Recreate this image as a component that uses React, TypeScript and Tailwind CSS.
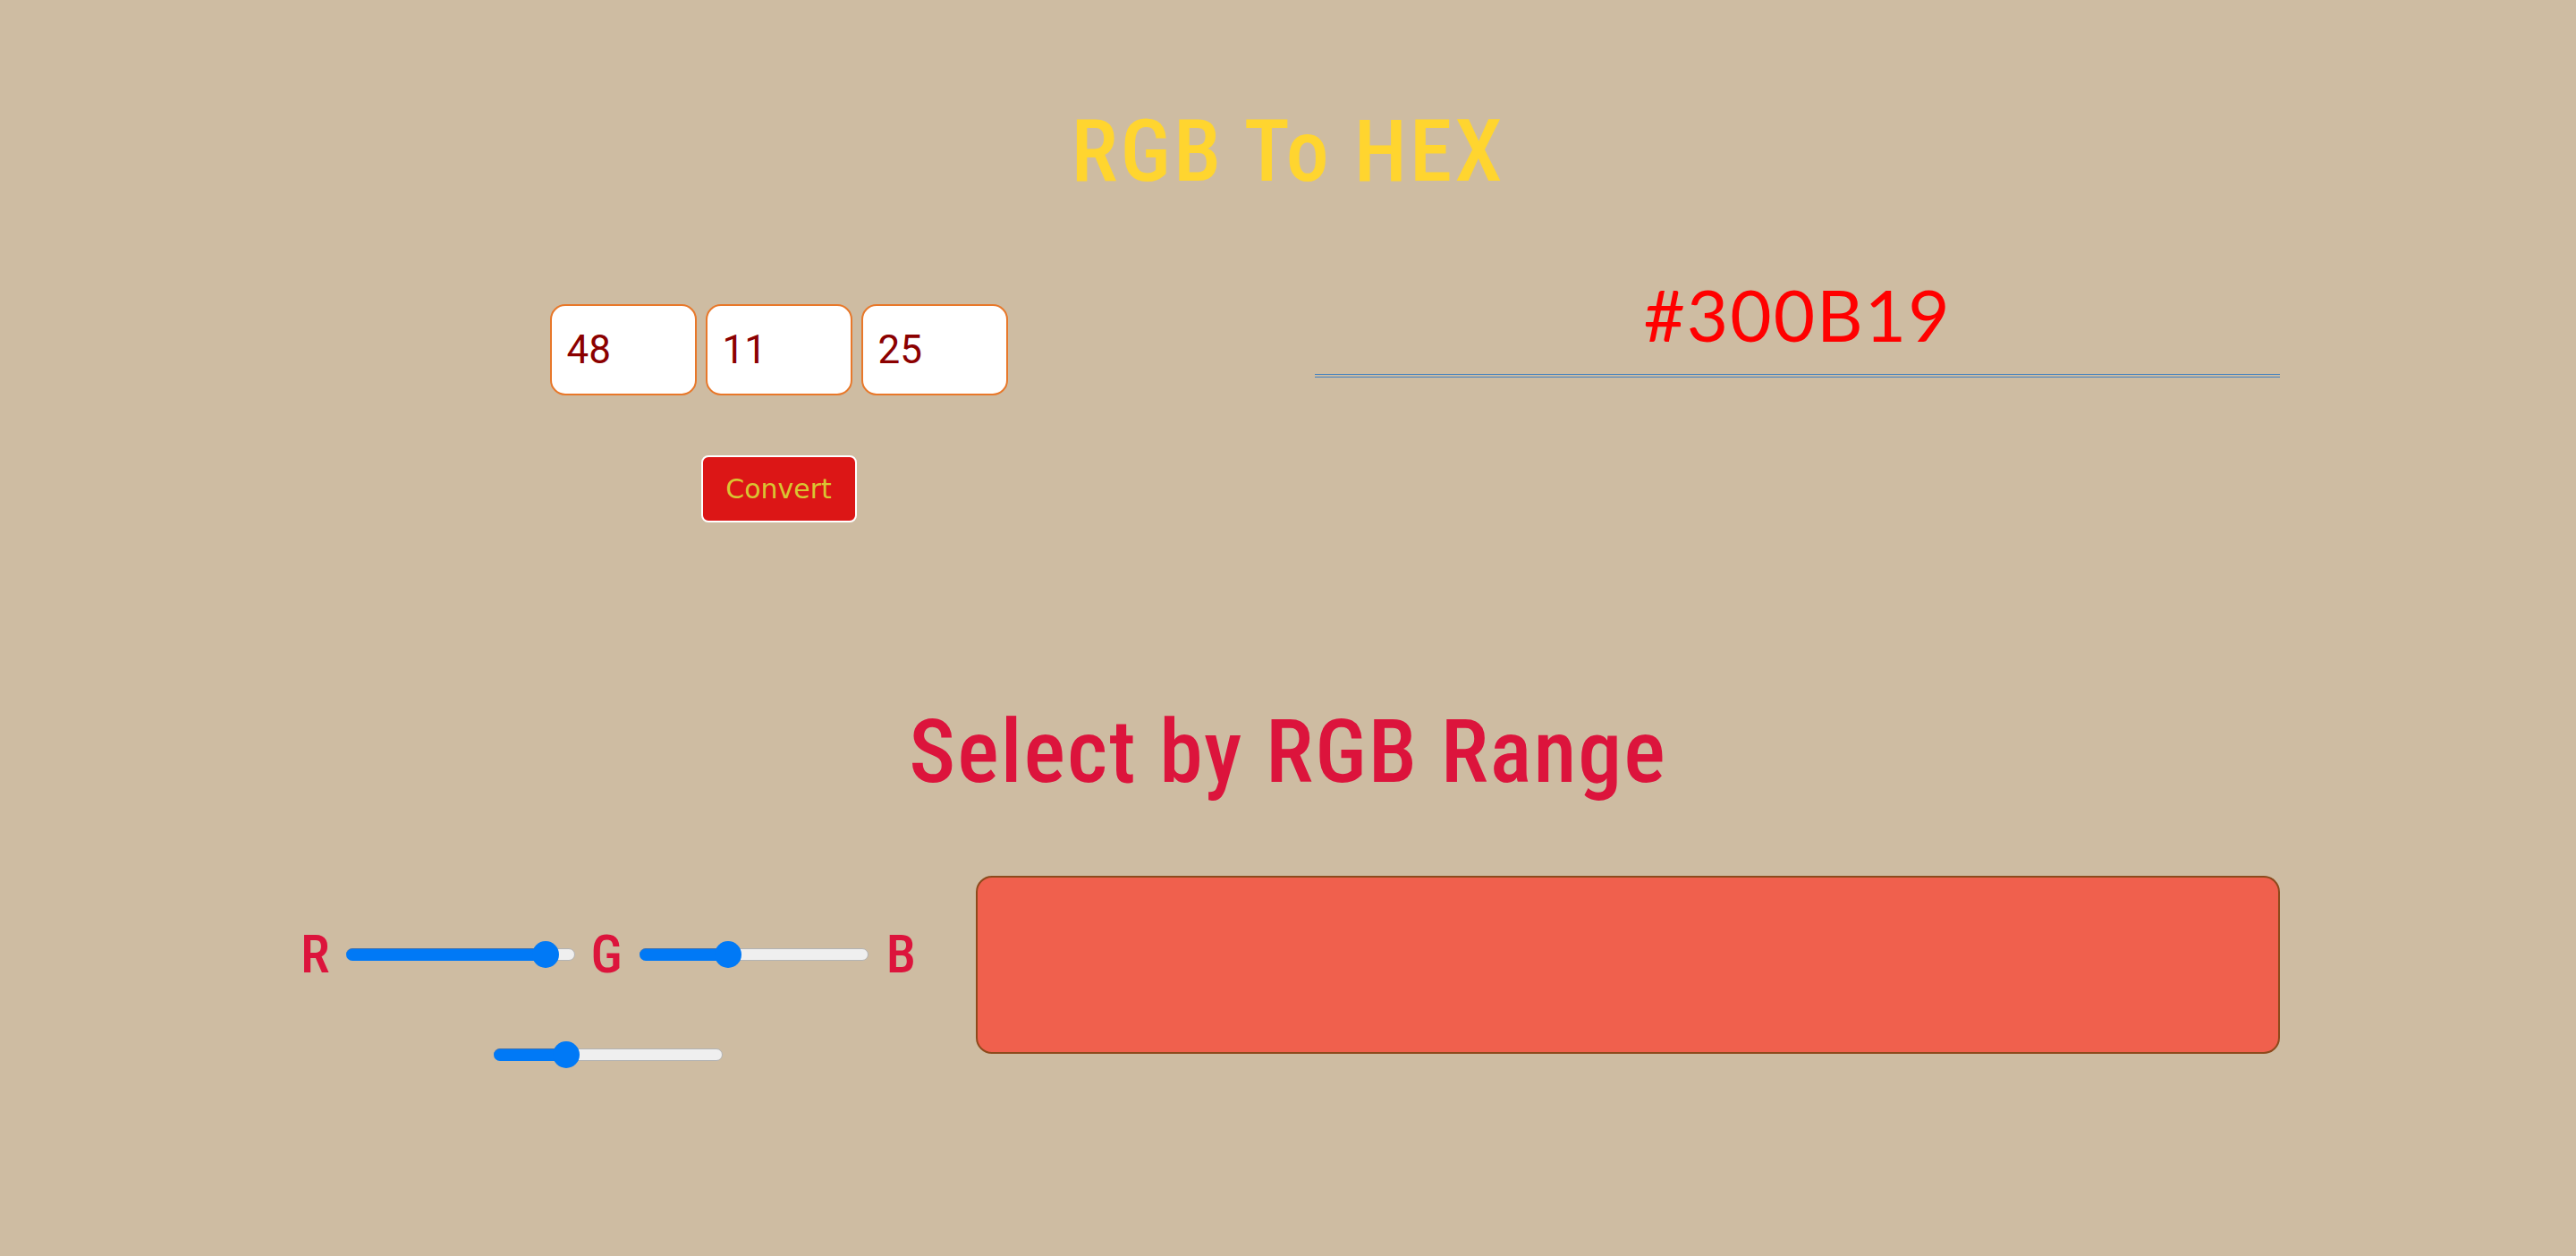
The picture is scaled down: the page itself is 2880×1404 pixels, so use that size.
import { useState } from "react";

const NARROW = "font-[family-name:'Liberation_Sans_Narrow','Roboto_Condensed',Roboto,sans-serif]";

const RangeSlider = ({ value }: { value: number }) => {
  // track 256px, thumb 30px
  const center = 15 + (value / 255) * 226;
  return (
    <div className="relative w-[256px] h-[30px] shrink-0">
      <div className="absolute left-0 right-0 top-[8px] h-[14px] rounded-full bg-[#efefef] border border-[#b3b3b3]" />
      <div
        className="absolute left-0 top-[8px] h-[14px] rounded-l-full bg-[#0079f6] border-t border-[#3d6fae]"
        style={{ width: center }}
      />
      <div
        className="absolute top-0 w-[30px] h-[30px] rounded-full bg-[#0079f6]"
        style={{ left: center - 15 }}
      />
    </div>
  );
};

const App = () => {
  const [rgb] = useState({ r: "48", g: "11", b: "25" });

  return (
    <div className="min-h-screen bg-[#cebca2] pt-[121px]">
      <div className="w-[2218px] mx-auto">
        {/* Heading */}
        <h1 className={`${NARROW} font-medium text-[96px] leading-none text-center text-[#ffd52f] tracking-[3px]`}>
          RGB To HEX
        </h1>

        {/* Converter */}
        <div className="flex gap-[60px] mt-[94px]">
          <div className="flex-1 flex flex-col items-center pt-[29px]">
            <div className="flex gap-[10px]">
              {[rgb.r, rgb.g, rgb.b].map((v, i) => (
                <input
                  key={i}
                  defaultValue={v}
                  className="font-['Roboto',sans-serif] w-[164px] h-[102px] rounded-[17px] border-2 border-[#e8782a] bg-white pl-[17px] text-[44px] text-[#8b0000] outline-none"
                />
              ))}
            </div>
            <button className="mt-[67px] w-[174px] h-[75px] rounded-[8px] border-2 border-white bg-[#dc1616] font-['DejaVu_Sans',sans-serif] text-[30px] text-[#d9c532]">
              Convert
            </button>
          </div>

          <div className="flex-1">
            <div className="font-['Lato',sans-serif] text-[80px] leading-none text-center text-[#ff0000] tracking-[2px]">
              #300B19
            </div>
            <div className="mt-[27px] flex flex-col gap-[2px]">
              <div className="h-px bg-[#3f7fc0]" />
              <div className="h-px bg-[#3f7fc0]" />
            </div>
          </div>
        </div>

        {/* Range section */}
        <h2 className={`${NARROW} font-medium mt-[208px] text-[98px] leading-none text-center text-[#dc143c] tracking-[2px]`}>
          Select by RGB Range
        </h2>

        <div className="flex gap-[62px] mt-[89px]">
          <div className="w-[698px] pt-[58px]">
            <div className={`${NARROW} font-medium flex items-center justify-center h-[60px] text-[60px] leading-none text-[#dc143c]`}>
              <span>R</span>
              <div className="ml-[18px] mr-[18px]">
                <RangeSlider value={235} />
              </div>
              <span>G</span>
              <div className="ml-[19px] mr-[20px]">
                <RangeSlider value={95} />
              </div>
              <span>B</span>
            </div>
            <div className="flex justify-center mt-[67px]">
              <RangeSlider value={75} />
            </div>
          </div>

          <div className="flex-1 h-[199px] rounded-[18px] border-2 border-[#8d4a1c] bg-[#f0604d]" />
        </div>
      </div>
    </div>
  );
};

export default App;
